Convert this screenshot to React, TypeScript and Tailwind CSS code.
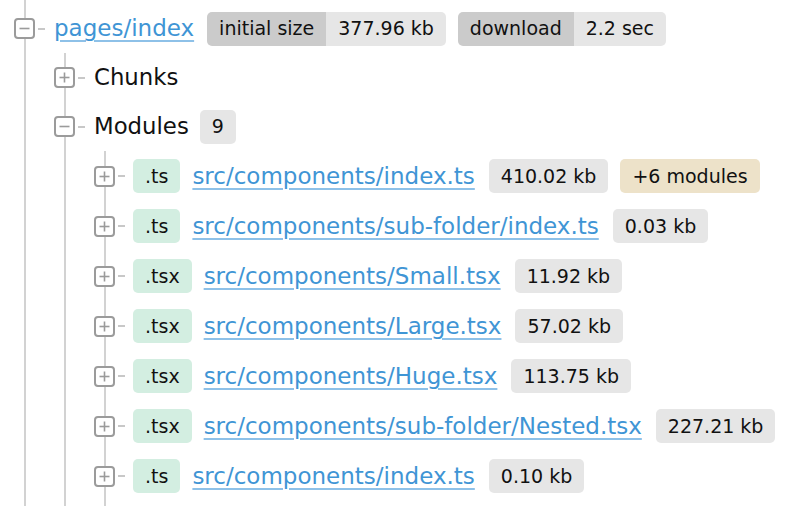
import type { ReactNode } from 'react';

interface ModuleRow {
  ext: string;
  path: string;
  size: string;
  extra?: string;
}

const modules: ModuleRow[] = [
  { ext: '.ts', path: 'src/components/index.ts', size: '410.02 kb', extra: '+6 modules' },
  { ext: '.ts', path: 'src/components/sub-folder/index.ts', size: '0.03 kb' },
  { ext: '.tsx', path: 'src/components/Small.tsx', size: '11.92 kb' },
  { ext: '.tsx', path: 'src/components/Large.tsx', size: '57.02 kb' },
  { ext: '.tsx', path: 'src/components/Huge.tsx', size: '113.75 kb' },
  { ext: '.tsx', path: 'src/components/sub-folder/Nested.tsx', size: '227.21 kb' },
  { ext: '.ts', path: 'src/components/index.ts', size: '0.10 kb' },
];

function Toggle({ open }: { open: boolean }) {
  return (
    <svg width="21" height="21" viewBox="0 0 21 21" className="shrink-0">
      <rect x="1" y="1" width="19" height="19" rx="3" fill="#fff" stroke="#9b9b9b" strokeWidth="2" />
      <path d="M5.5 10.5h10" stroke="#9b9b9b" strokeWidth="1.6" />
      {!open && <path d="M10.5 5.5v10" stroke="#9b9b9b" strokeWidth="1.6" />}
    </svg>
  );
}

function Row({ open, h, children }: { open: boolean; h: string; children: ReactNode }) {
  return (
    <div className={`flex items-center ${h}`}>
      <Toggle open={open} />
      <span className="ml-[3px] h-[2px] w-[7px] bg-[#c8c8c8]" />
      <div className="ml-[9px] flex items-center">{children}</div>
    </div>
  );
}

// vertical guide line drawn behind the toggles of one level
function List({ className, children }: { className?: string; children: ReactNode }) {
  return (
    <div
      className={`bg-[linear-gradient(#d2d2d2,#d2d2d2)] bg-no-repeat bg-[length:2px_100%] bg-[position:10px_0] ${className ?? ''}`}
    >
      {children}
    </div>
  );
}

function Badge({ tone = 'gray', children }: { tone?: 'gray' | 'green' | 'tan'; children: ReactNode }) {
  const bg = tone === 'green' ? 'bg-[#d3eee1]' : tone === 'tan' ? 'bg-[#ede2c9]' : 'bg-[#e6e6e6]';
  return (
    <span className={`flex h-[34px] items-center rounded-[5px] px-3 text-[19px] text-[#111] ${bg}`}>
      {children}
    </span>
  );
}

function Stat({ label, value }: { label: string; value: string }) {
  return (
    <span className="flex h-[34px] overflow-hidden rounded-[5px] text-[19px] text-[#111]">
      <span className="flex items-center bg-[#cbcbcb] px-3">{label}</span>
      <span className="flex items-center bg-[#e6e6e6] px-3">{value}</span>
    </span>
  );
}

const linkCls = 'text-[23px] text-[#3f95d5] underline decoration-[#8ec1e8] decoration-2 underline-offset-[4px]';

export default function App() {
  return (
    <div className="h-screen overflow-hidden bg-white pl-[14px] font-['DejaVu_Sans',sans-serif] text-[#111]">
      <List className="h-full pt-[4px]">
        <Row open h="h-[49px]">
          <a href="#" className={linkCls}>pages/index</a>
          <div className="ml-[13px] flex gap-3">
            <Stat label="initial size" value="377.96 kb" />
            <Stat label="download" value="2.2 sec" />
          </div>
        </Row>
        <div className="pl-[40px]">
          <List className="pb-[12px]">
            <Row open={false} h="h-[49px]">
              <span className="text-[22.8px]">Chunks</span>
            </Row>
            <Row open h="h-[49px]">
              <span className="text-[22.8px]">Modules</span>
              <span className="ml-[11px]">
                <Badge>9</Badge>
              </span>
            </Row>
            <div className="pl-[40px]">
              <List className="pb-[12px]">
                {modules.map((m, i) => (
                  <div key={i} className="flex h-[50px] items-center">
                    <Toggle open={false} />
                    <span className="ml-[3px] h-[2px] w-[7px] bg-[#c8c8c8]" />
                    <div className="ml-[8px] flex items-center gap-3">
                      <Badge tone="green">{m.ext}</Badge>
                      <a href="#" className={linkCls}>{m.path}</a>
                      <span className="ml-[2px] flex gap-3">
                        <Badge>{m.size}</Badge>
                        {m.extra && <Badge tone="tan">{m.extra}</Badge>}
                      </span>
                    </div>
                  </div>
                ))}
              </List>
            </div>
          </List>
        </div>
      </List>
    </div>
  );
}
